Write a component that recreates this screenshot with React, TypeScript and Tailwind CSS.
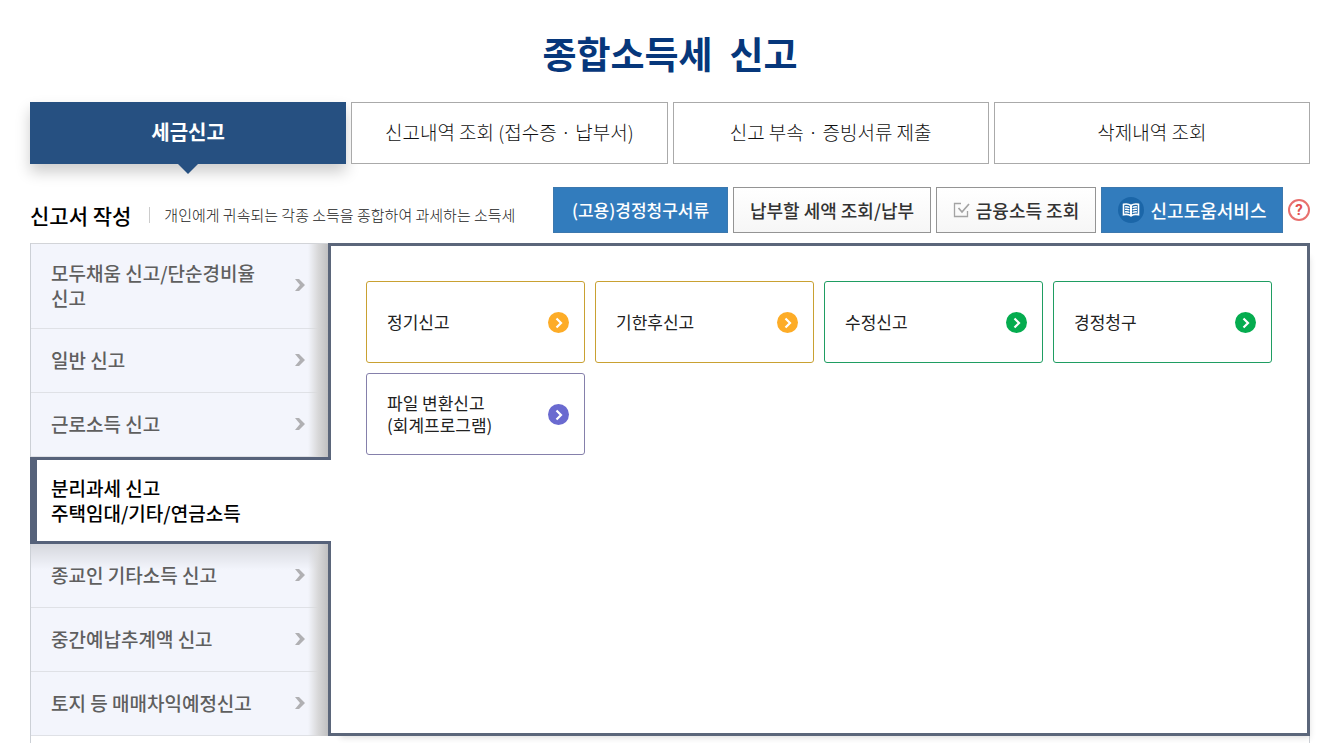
type Tone = 'amber' | 'green' | 'violet';

const tabs = [
  '세금신고',
  '신고내역 조회 (접수증 · 납부서)',
  '신고 부속 · 증빙서류 제출',
  '삭제내역 조회',
];

const menu = [
  { lines: ['모두채움 신고/단순경비율', '신고'] },
  { lines: ['일반 신고'] },
  { lines: ['근로소득 신고'] },
  { lines: ['분리과세 신고', '주택임대/기타/연금소득'], active: true },
  { lines: ['종교인 기타소득 신고'], shaded: true },
  { lines: ['중간예납추계액 신고'] },
  { lines: ['토지 등 매매차익예정신고'] },
];

const cards: { lines: string[]; tone: Tone }[] = [
  { lines: ['정기신고'], tone: 'amber' },
  { lines: ['기한후신고'], tone: 'amber' },
  { lines: ['수정신고'], tone: 'green' },
  { lines: ['경정청구'], tone: 'green' },
  { lines: ['파일 변환신고', '(회계프로그램)'], tone: 'violet' },
];

const borderTone = {
  amber: 'border-[#c9a132]',
  green: 'border-[#1f9d62]',
  violet: 'border-[#8580ab]',
};

const fillTone = {
  amber: 'fill-[#fdac27]',
  green: 'fill-[#05ac4f]',
  violet: 'fill-[#6a6ad0]',
};

function CircleArrow({ tone }: { tone: Tone }) {
  return (
    <svg viewBox="0 0 21 21" className="h-[21px] w-[21px] shrink-0" aria-hidden="true">
      <circle cx="10.5" cy="10.5" r="10.5" className={fillTone[tone]} />
      <path d="M8.5 6.5l4.5 4.5-4.5 4.5" fill="none" stroke="#fff" strokeWidth="2.2" />
    </svg>
  );
}

function MenuArrow() {
  return (
    <svg viewBox="0 0 10 12" className="h-3 w-[10px] shrink-0" aria-hidden="true">
      <path d="M0 0h4l6 6-6 6H0l5-6z" fill="#b0b0b3" />
    </svg>
  );
}

function CheckIcon() {
  return (
    <svg viewBox="0 0 17 16" className="h-4 w-[17px]" fill="none" stroke="#a3a3a3" aria-hidden="true">
      <path d="M8 1.5H1.5v13h13V9" strokeWidth="1.3" />
      <path d="M5.5 6l3.500 4L16 2" strokeWidth="1.7" />
    </svg>
  );
}

function BookIcon() {
  return (
    <svg viewBox="0 0 26 26" className="h-[26px] w-[26px]" fill="none" aria-hidden="true">
      <circle cx="13" cy="13" r="13" fill="#1b66a8" />
      <g stroke="#fff">
        <path
          d="M13 8.5C11 7 8 6.800 5.500 7.300v10.400c2.500-.5 5.500-.3 7.500 1.300 2-1.600 5-1.800 7.500-1.300V7.300C18 6.800 15 7 13 8.500z"
          strokeWidth="1.6"
        />
        <path d="M13 8.500V19" strokeWidth="2" />
        <path
          d="M7 9.800c1.600-.2 3.100 0 4.500.7M7 12.300c1.600-.2 3.100 0 4.500.7M7 14.800c1.600-.2 3.100 0 4.500.7M19 9.800c-1.600-.2-3.100 0-4.500.7M19 12.300c-1.600-.2-3.100 0-4.500.7M19 14.800c-1.600-.2-3.100 0-4.500.7"
          strokeWidth="1.3"
        />
      </g>
    </svg>
  );
}

export default function App() {
  return (
    <div className="bg-white pr-[29px] pl-[30px] font-['Noto_Sans_CJK_KR',sans-serif] text-[#333]">
      <h1 className="pt-[23px] pb-[19px] text-center text-[37px] leading-[60px] font-bold whitespace-pre text-[#06377b]">
        {'종합소득세  신고'}
      </h1>

      <nav className="grid grid-cols-4 gap-[5px]">
        {tabs.map((tab, i) =>
          i === 0 ? (
            <button
              key={tab}
              className="relative h-[62px] bg-[#265081] pb-[2px] text-[20px] font-bold text-white shadow-[0_8px_14px_rgba(0,0,0,0.2)]"
            >
              {tab}
              <svg
                viewBox="0 0 20 10"
                className="absolute top-full left-1/2 h-[10px] w-5 -translate-x-1/2 fill-[#265081]"
                aria-hidden="true"
              >
                <path d="M0 0h20L10 10z" />
              </svg>
            </button>
          ) : (
            <button
              key={tab}
              className="relative h-[62px] border border-[#aaa] bg-white pb-[2px] text-[19px] font-light text-[#111]"
            >
              {tab}
            </button>
          )
        )}
      </nav>

      <div className="mt-[23px] mb-[10px] flex h-[46px] items-center justify-between">
        <div className="flex items-center pt-[10px] whitespace-nowrap">
          <h2 className="text-[21px] leading-7 font-medium text-black">신고서 작성</h2>
          <span className="mr-[14px] ml-[18px] h-4 w-px bg-[#ccc]" />
          <p className="text-[15px] font-light text-[#222]">
            개인에게 귀속되는 각종 소득을 종합하여 과세하는 소득세
          </p>
        </div>
        <div className="flex items-center gap-[5px] text-[18px] font-medium whitespace-nowrap">
          <button className="h-[46px] w-[175px] border border-[#3c78ae] bg-[#327cbd] text-[17px] text-white">
            (고용)경정청구서류
          </button>
          <button className="h-[46px] w-[198px] border border-[#949494] bg-gradient-to-b from-white to-[#f6f6f6]">
            납부할 세액 조회/납부
          </button>
          <button className="flex h-[46px] w-40 items-center justify-center gap-[6px] border border-[#949494] bg-gradient-to-b from-white to-[#f6f6f6]">
            <CheckIcon />
            금융소득 조회
          </button>
          <button className="flex h-[46px] w-[182px] items-center justify-center gap-[7px] border border-[#3c78ae] bg-[#327cbd] text-white">
            <BookIcon />
            신고도움서비스
          </button>
          <button
            className="flex h-[22px] w-[22px] items-center justify-center rounded-full border-2 border-[#e8706e] font-['Roboto',sans-serif] text-[15px] leading-none font-bold text-[#e2504e]"
            aria-label="도움말"
          >
            ?
          </button>
        </div>
      </div>

      <div className="border-r border-l border-[#ccd0d6] bg-white pb-[7px]">
        <div className="-mr-px grid grid-cols-[297px_1fr]">
          <ul className="border-t border-[#d2d4d8] text-[19px] leading-[25px] font-medium">
            {menu.map((item) =>
              item.active ? (
                <li key={item.lines[0]} className="relative z-10 -mr-[3px] -ml-px">
                  <a
                    href="#"
                    aria-current="page"
                    className="flex h-[87px] items-center border-y-[3px] border-l-[7px] border-[#56627a] bg-white pb-[2px] pl-[14px] text-black"
                  >
                    <span>
                      {item.lines.map((line) => (
                        <span key={line} className="block">
                          {line}
                        </span>
                      ))}
                    </span>
                  </a>
                </li>
              ) : (
                <li
                  key={item.lines[0]}
                  className="relative border-b border-[#dfe1e6] bg-[#f3f5fc] after:pointer-events-none after:absolute after:top-0 after:right-0 after:-bottom-px after:w-5 after:bg-[linear-gradient(to_right,rgba(236,236,238,0),#d8d8d9_50%,#c0c0c1)]"
                >
                  <a
                    href="#"
                    className={
                      item.shaded
                        ? 'flex min-h-[63px] items-center justify-between bg-[linear-gradient(rgba(0,0,0,0.12),transparent_26px)] pr-[23px] pb-[2px] pl-5 text-[#5f5f5f]'
                        : 'flex min-h-[63px] items-center justify-between pt-4 pr-[23px] pb-[18px] pl-5 text-[#5f5f5f]'
                    }
                  >
                    <span>
                      {item.lines.map((line) => (
                        <span key={line} className="block">
                          {line}
                        </span>
                      ))}
                    </span>
                    <MenuArrow />
                  </a>
                </li>
              )
            )}
          </ul>

          <main className="border-[3px] border-[#5b667a] bg-white p-[35px] shadow-[6px_8px_6px_-6px_rgba(0,0,0,0.12)]">
            <div className="grid grid-cols-4 gap-[10px]">
              {cards.map((card) => (
                <button
                  key={card.lines[0]}
                  className={`flex h-[82px] items-center justify-between rounded-[3px] border bg-white pr-[15px] pl-5 text-left text-[17px] leading-[22px] text-[#222] ${borderTone[card.tone]}`}
                >
                  <span>
                    {card.lines.map((line) => (
                      <span key={line} className="block">
                        {line}
                      </span>
                    ))}
                  </span>
                  <CircleArrow tone={card.tone} />
                </button>
              ))}
            </div>
          </main>
        </div>
      </div>
    </div>
  );
}
